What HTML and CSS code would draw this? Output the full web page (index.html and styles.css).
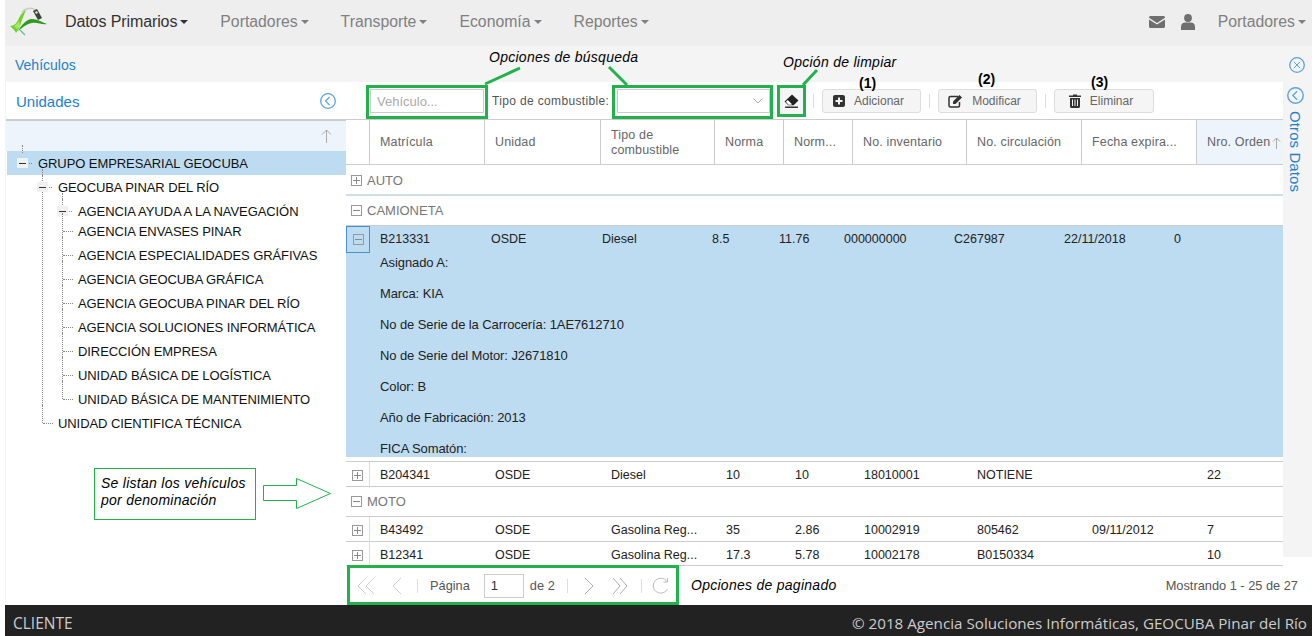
FILE: index.html
```html
<!DOCTYPE html>
<html lang="es">
<head>
    <meta charset="UTF-8">
    <title>Vehículos</title>
    <link rel="stylesheet" href="styles.css">
</head>
<body>
    <div class="page">
        <nav class="navbar">
            <svg class="logo" viewBox="0 0 42 32" width="42" height="32">
                <path d="M13 6C17 2 22 1 27 4" fill="none" stroke="#c8cec4" stroke-width="1.500"/>
                <path d="M1 20c4 0 7-3 9-8 2-4 4-6 7-8-2 5-4 9-5 13-1 4-3 7-5 10-1-3-4-5-6-7z" fill="#6fd22c"/>
                <path d="M9 25c3-5 8-12 14-12 5 0 10 3 15 5-5 1-10-2-15-1-6 1-10 5-14 8z" fill="#2f9a1e"/>
                <path d="M5 20c2-1 4-3 5-5l1 5-3 3z" fill="#a6ec5a"/>
                <path d="M11 24l5 5" stroke="#5cc0a0" stroke-width="1.200"/>
                <path d="M24 5l4-2 5 9-4 2z" fill="#3c423c"/>
                <path d="M26 6l2-1 1 2-2 1z" fill="#e4e8e2"/>
            </svg>
            <ul class="menu">
                <li class="menu-item active">Datos Primarios<i class="caret"></i></li>
                <li class="menu-item">Portadores<i class="caret"></i></li>
                <li class="menu-item">Transporte<i class="caret"></i></li>
                <li class="menu-item">Economía<i class="caret"></i></li>
                <li class="menu-item">Reportes<i class="caret"></i></li>
            </ul>
            <div class="nav-right">
                <svg class="nav-icon" viewBox="0 0 16 12" width="16" height="12"><path d="M0 1.500C0 .7.700 0 1.500 0h13c.8 0 1.500.7 1.500 1.500v.3L8 7 0 1.800zM0 3.400l8 5.200 8-5.200v7.100c0 .8-.7 1.500-1.500 1.500h-13C.7 12 0 11.300 0 10.500z" fill="#6f6f6f"/></svg>
                <svg class="nav-icon user" viewBox="0 0 14 16" width="14" height="16"><circle cx="7" cy="4" r="3.900" fill="#6f6f6f"/><path d="M0 16v-3.500C0 10 2 8.500 4 8.500h6c2 0 4 1.500 4 4V16z" fill="#6f6f6f"/></svg>
                <div class="menu-item">Portadores<i class="caret"></i></div>
            </div>
        </nav>

        <div class="content">
            <div class="title-bar">
                <span class="title">Vehículos</span>
                <svg class="round-icon" viewBox="0 0 16 16" width="16" height="16"><circle cx="8" cy="8" r="7.300" fill="none" stroke="#5aa5dc" stroke-width="1.300"/><path d="M4.800 4.800l6.400 6.400M11.200 4.800l-6.400 6.400" stroke="#5aa5dc" fill="none"/></svg>
            </div>

            <div class="panels">
                <aside class="tree-pane">
                    <div class="tree-head">
                        <span>Unidades</span>
                        <svg class="round-icon" viewBox="0 0 16 16" width="16" height="16"><circle cx="8" cy="8" r="7.300" fill="none" stroke="#5aa5dc" stroke-width="1.300"/><path d="M9.500 4L5.500 8l4 4" stroke="#5aa5dc" stroke-width="1.200" fill="none"/></svg>
                    </div>
                    <div class="tree-sort">
                        <svg viewBox="0 0 11 14" width="11" height="14"><path d="M5.500 14V1M1 5.500l4.500-4.500L10 5.500" stroke="#aaa" fill="none"/></svg>
                    </div>
                    <ul class="tree">
                        <li>
                            <div class="tree-row selected"><span class="tree-node open"></span>GRUPO EMPRESARIAL GEOCUBA</div>
                            <ul>
                                <li>
                                    <div class="tree-row"><span class="tree-node open"></span>GEOCUBA PINAR DEL RÍO</div>
                                    <ul>
                                        <li><div class="tree-row"><span class="tree-node open"></span>AGENCIA AYUDA A LA NAVEGACIÓN</div></li>
                                        <li><div class="tree-row short"><span class="tree-node"></span>AGENCIA ENVASES PINAR</div></li>
                                        <li><div class="tree-row"><span class="tree-node"></span>AGENCIA ESPECIALIDADES GRÁFIVAS</div></li>
                                        <li><div class="tree-row"><span class="tree-node"></span>AGENCIA GEOCUBA GRÁFICA</div></li>
                                        <li><div class="tree-row"><span class="tree-node"></span>AGENCIA GEOCUBA PINAR DEL RÍO</div></li>
                                        <li><div class="tree-row"><span class="tree-node"></span>AGENCIA SOLUCIONES INFORMÁTICA</div></li>
                                        <li><div class="tree-row"><span class="tree-node"></span>DIRECCIÓN EMPRESA</div></li>
                                        <li><div class="tree-row"><span class="tree-node"></span>UNIDAD BÁSICA DE LOGÍSTICA</div></li>
                                        <li><div class="tree-row"><span class="tree-node"></span>UNIDAD BÁSICA DE MANTENIMIENTO</div></li>
                                    </ul>
                                </li>
                                <li><div class="tree-row"><span class="tree-node"></span>UNIDAD CIENTIFICA TÉCNICA</div></li>
                            </ul>
                        </li>
                    </ul>
                </aside>

                <main class="main">
                    <div class="data-area">
                        <section class="grid">
                            <div class="toolbar">
                                <div class="field search">Vehículo...</div>
                                <label class="combo-label">Tipo de combustible:</label>
                                <div class="field combo">
                                    <svg viewBox="0 0 10 6" width="10" height="6"><path d="M.5.500L5 5 9.500.500" stroke="#aaa" fill="none"/></svg>
                                </div>
                                <button class="tool-btn clear">
                                    <svg viewBox="0 0 14 13" width="15" height="14"><path d="M7.500.500L13.500 6 9 10.500H4L.500 7z" fill="#222"/><path d="M3.500 5.500l4 4L6.500 10H4.200L1.800 7.300z" fill="#fff"/><path d="M1 12.300h12" stroke="#222" stroke-width="1.300"/></svg>
                                </button>
                                <span class="tool-sep"></span>
                                <button class="tool-btn">
                                    <svg viewBox="0 0 12 12" width="12" height="12"><path fill-rule="evenodd" d="M2 0h8c1.100 0 2 .9 2 2v8c0 1.100-.9 2-2 2H2c-1.100 0-2-.9-2-2V2C0 .9.900 0 2 0zm3 2.500V5H2.500v2H5v2.500h2V7h2.500V5H7V2.500z" fill="#333"/></svg>
                                    Adicionar
                                </button>
                                <span class="tool-sep"></span>
                                <button class="tool-btn">
                                    <svg viewBox="0 0 15 14" width="15" height="14"><path d="M10 2.500H2.500c-.8 0-1.500.7-1.500 1.500v7.500c0 .8.700 1.500 1.500 1.500H10c.8 0 1.500-.7 1.500-1.500V8" fill="none" stroke="#333" stroke-width="1.500"/><path d="M5 7.500L11.500 1 14 3.500 7.500 10H5z" fill="#333"/></svg>
                                    Modificar
                                </button>
                                <span class="tool-sep"></span>
                                <button class="tool-btn wide">
                                    <svg viewBox="0 0 12 14" width="12" height="14"><path d="M0 1.500h4V.500h4v1h4V3H0z" fill="#333"/><path fill-rule="evenodd" d="M1 4h10v8.500c0 .8-.7 1.500-1.500 1.500h-7C1.700 14 1 13.300 1 12.500zm2 1.500V12h1V5.500zm2.500 0V12h1V5.500zm2.500 0V12h1V5.500z" fill="#333"/></svg>
                                    Eliminar
                                </button>
                            </div>

                            <div class="grid-head">
                                <div class="head-cell blank"></div>
                                <div class="head-cell">Matrícula</div>
                                <div class="head-cell">Unidad</div>
                                <div class="head-cell">Tipo de combustible</div>
                                <div class="head-cell">Norma</div>
                                <div class="head-cell">Norm...</div>
                                <div class="head-cell">No. inventario</div>
                                <div class="head-cell">No. circulación</div>
                                <div class="head-cell">Fecha expira...</div>
                                <div class="head-cell sorted">Nro. Orden
                                    <svg viewBox="0 0 9 12" width="9" height="12"><path d="M4.500 12V1M1 4.500L4.500 1 8 4.500" stroke="#aaa" fill="none"/></svg>
                                </div>
                            </div>

                            <div class="group-row first"><i class="exp plus"></i>AUTO</div>
                            <div class="group-row"><i class="exp"></i>CAMIONETA</div>

                            <div class="detail-row">
                                <div class="detail-cells">
                                    <div class="exp-cell focused"><i class="exp"></i></div>
                                    <div>B213331</div>
                                    <div>OSDE</div>
                                    <div>Diesel</div>
                                    <div>8.5</div>
                                    <div>11.76</div>
                                    <div>000000000</div>
                                    <div>C267987</div>
                                    <div>22/11/2018</div>
                                    <div>0</div>
                                </div>
                                <div class="detail-info">
                                    <p>Asignado A:</p>
                                    <p>Marca: KIA</p>
                                    <p>No de Serie de la Carrocería: 1AE7612710</p>
                                    <p>No de Serie del Motor: J2671810</p>
                                    <p>Color: B</p>
                                    <p>Año de Fabricación: 2013</p>
                                    <p>FICA Somatón:</p>
                                </div>
                            </div>
                            <div class="detail-gap"></div>

                            <div class="data-row">
                                <div class="exp-cell"><i class="exp plus"></i></div>
                                <div>B204341</div><div>OSDE</div><div>Diesel</div><div>10</div><div>10</div><div>18010001</div><div>NOTIENE</div><div></div><div>22</div>
                            </div>
                            <div class="group-row"><i class="exp"></i>MOTO</div>
                            <div class="data-row">
                                <div class="exp-cell"><i class="exp plus"></i></div>
                                <div>B43492</div><div>OSDE</div><div>Gasolina Reg...</div><div>35</div><div>2.86</div><div>10002919</div><div>805462</div><div>09/11/2012</div><div>7</div>
                            </div>
                            <div class="data-row">
                                <div class="exp-cell"><i class="exp plus"></i></div>
                                <div>B12341</div><div>OSDE</div><div>Gasolina Reg...</div><div>17.3</div><div>5.78</div><div>10002178</div><div>B0150334</div><div></div><div>10</div>
                            </div>
                        </section>

                        <aside class="side-strip">
                            <svg class="round-icon" viewBox="0 0 16 16" width="17" height="17"><circle cx="8" cy="8" r="7.300" fill="none" stroke="#5aa5dc" stroke-width="1.300"/><path d="M9.500 4L5.500 8l4 4" stroke="#5aa5dc" stroke-width="1.200" fill="none"/></svg>
                            <span class="side-label">Otros Datos</span>
                        </aside>
                    </div>

                    <div class="pager">
                        <svg class="pg-icon" viewBox="0 0 18 18" width="18" height="18"><path d="M9 1L1 9l8 8M17 1L9 9l8 8" stroke="#ccc" fill="none"/></svg>
                        <svg class="pg-icon prev" viewBox="0 0 12 18" width="12" height="18"><path d="M10 1L2 9l8 8" stroke="#ccc" fill="none"/></svg>
                        <span class="pg-sep"></span>
                        <span class="pg-text">Página</span>
                        <div class="pg-input">1</div>
                        <span class="pg-text of">de 2</span>
                        <span class="pg-sep"></span>
                        <svg class="pg-icon next" viewBox="0 0 12 18" width="12" height="18"><path d="M2 1l8 8-8 8" stroke="#aaa" fill="none"/></svg>
                        <svg class="pg-icon last" viewBox="0 0 16 18" width="16" height="18"><path d="M1 1l7 8-7 8M8 1l7 8-7 8" stroke="#aaa" fill="none"/></svg>
                        <span class="pg-sep"></span>
                        <svg class="pg-icon reload" viewBox="0 0 18 18" width="18" height="18"><path d="M15.500 12a7.500 7.500 0 1 1-.5-7.500M15.500 1v4h-4" stroke="#bbb" fill="none"/></svg>
                        <span class="pg-status">Mostrando 1 - 25 de 27</span>
                    </div>
                </main>
            </div>
        </div>

        <footer class="footer">
            <span class="role">CLIENTE</span>
            <span>© 2018 Agencia Soluciones Informáticas, GEOCUBA Pinar del Río</span>
        </footer>
    </div>

    <!-- notes drawn on top of the screenshot -->
    <div class="notes">
        <svg class="notes-lines" viewBox="0 0 1312 636" width="1312" height="636">
            <g fill="none" stroke="#22b14c" stroke-width="3">
                <rect x="367.500" y="86.500" width="119" height="31"/>
                <rect x="613.500" y="86.500" width="158" height="31"/>
                <rect x="778.500" y="86.500" width="26" height="29"/>
                <rect x="348.500" y="566.500" width="329" height="37"/>
                <path d="M485 84l35-16M627 85l-18-18M803 85l14-15"/>
            </g>
            <rect x="94.500" y="468.500" width="161" height="51" fill="#fff" stroke="#22b14c"/>
            <path d="M263.500 485.500h33v-7l34 15-34 15v-8h-33z" fill="#fff" stroke="#22b14c"/>
        </svg>
        <span class="note n-search">Opciones de búsqueda</span>
        <span class="note n-clear">Opción de limpiar</span>
        <span class="note n-list">Se listan los vehículos<br>por denominación</span>
        <span class="note n-pager">Opciones de paginado</span>
        <span class="num n1">(1)</span>
        <span class="num n2">(2)</span>
        <span class="num n3">(3)</span>
    </div>
</body>
</html>
```

FILE: styles.css
```css
* {
    box-sizing: border-box;
}

html, body {
    margin: 0;
    height: 100%;
    overflow: hidden;
}

body {
    font-family: "Liberation Sans", Arial, sans-serif;
    font-size: 12px;
    color: #222;
    background-color: #fff;
}

ul {
    list-style: none;
    margin: 0;
    padding: 0;
}

.page {
    display: flex;
    flex-direction: column;
    height: 636px;
    padding-left: 5px;
}

/* navbar */
.navbar {
    display: flex;
    align-items: center;
    height: 46px;
    flex: none;
    padding-bottom: 2px;
    background-color: #eee;
}

.logo {
    margin-left: 4px;
    flex: none;
}

.menu {
    display: flex;
    margin-left: -2px;
}

.menu-item {
    padding: 0 16px;
    font-size: 15.8px;
    color: #808080;
    white-space: nowrap;
}

.menu-item.active {
    font-size: 16px;
    color: #333;
    letter-spacing: -.1px;
}

.caret {
    display: inline-block;
    margin-left: 3px;
    vertical-align: 3px;
    border-top: 4px solid currentColor;
    border-left: 4px solid transparent;
    border-right: 4px solid transparent;
}

.nav-right {
    display: flex;
    align-items: center;
    margin-left: auto;
}

.nav-icon {
    margin-right: 16px;
}

.nav-icon.user {
    margin-right: 7px;
}

.nav-right .menu-item {
    padding: 0 6px 0 16px;
}

/* page frame */
.content {
    flex: 1;
    display: flex;
    flex-direction: column;
    min-height: 0;
    background-color: #f4f4f4;
}

.title-bar {
    display: flex;
    align-items: center;
    justify-content: space-between;
    height: 36px;
    flex: none;
    padding: 1px 7px 0 10px;
}

.title {
    font-size: 14px;
    color: #1b81cd;
}

.round-icon {
    flex: none;
}

.panels {
    flex: 1;
    display: flex;
    min-height: 0;
}

/* left tree */
.tree-pane {
    width: 340px;
    flex: none;
    margin-left: 1px;
    background-color: #fff;
}

.tree-head {
    display: flex;
    align-items: center;
    justify-content: space-between;
    height: 39px;
    padding: 1px 10px 0 10px;
    font-size: 15px;
    color: #1b81cd;
    border-bottom: 2px solid #ccc;
}

.tree-sort {
    display: flex;
    align-items: center;
    justify-content: flex-end;
    height: 30px;
    padding-right: 14px;
    background-color: #edf4fb;
}

.tree {
    font-size: 13px;
    letter-spacing: -.08px;
    color: #111;
}

.tree-row {
    display: flex;
    align-items: center;
    height: 24px;
    margin-left: 1px;
    white-space: nowrap;
}

.tree-row.short {
    margin-top: -4px;
}

.tree-row.selected {
    background-color: #bedcf1;
}

.tree ul {
    position: relative;
    padding-left: 20px;
}

.tree ul::before {
    content: "";
    position: absolute;
    left: 36px;
    top: 0;
    bottom: 12px;
    border-left: 1px dotted #888;
}

.tree-node {
    position: relative;
    align-self: stretch;
    width: 31px;
    flex: none;
}

.tree-node::before {
    content: "";
    position: absolute;
    left: 15px;
    top: -6px;
    height: 18px;
    border-left: 1px dotted #888;
}

.tree-node::after {
    content: "";
    position: absolute;
    left: 16px;
    top: 50%;
    width: 10px;
    border-top: 1px dotted #888;
}

.tree-node.open {
    background:
        linear-gradient(#333, #333) 12px 50% / 7px 1px no-repeat,
        linear-gradient(#f1f1f1, #f1f1f1) 10px 50% / 11px 10px no-repeat;
}

.tree-node.open::before {
    height: 8px;
}

.tree-node.open::after {
    left: 22px;
    width: 3px;
}

/* grid */
.main {
    flex: 1;
    display: flex;
    flex-direction: column;
    min-width: 0;
    background-color: #fff;
}

.data-area {
    flex: 1;
    display: flex;
    min-height: 0;
}

.grid {
    width: 937px;
    flex: none;
    overflow: hidden;
}

.toolbar {
    display: flex;
    align-items: center;
    gap: 8px;
    height: 38px;
    padding: 1px 0 0 24px;
    border-bottom: 1px solid #ccc;
}

.field {
    display: flex;
    align-items: center;
    height: 24px;
    border: 1px solid #ccc;
    background-color: #fff;
}

.search {
    width: 114px;
    padding-left: 6px;
    font-size: 13px;
    color: #aaa;
}

.combo-label {
    width: 117px;
    color: #555;
    white-space: nowrap;
    letter-spacing: .35px;
}

.combo {
    width: 153px;
    justify-content: flex-end;
    padding-right: 6px;
}

.tool-btn {
    display: flex;
    align-items: center;
    justify-content: center;
    gap: 9px;
    width: 99px;
    height: 24px;
    padding: 0 6px 0 0;
    font: inherit;
    color: #666;
    background-color: #f5f5f5;
    border: 1px solid #ddd;
    border-radius: 3px;
}

.tool-btn.wide {
    width: 100px;
}

.tool-btn.clear {
    width: 27px;
    height: 28px;
    padding: 0;
    border: none;
}

.tool-sep {
    width: 1px;
    height: 14px;
    background-color: #ddd;
}

.grid-head {
    display: grid;
    grid-template-columns: 23px 115px 116px 114px 69px 69px 114px 115px 115px 87px;
    height: 45px;
    border-bottom: 1px solid #ccc;
}

.head-cell {
    display: flex;
    align-items: center;
    padding: 1px 0 0 10px;
    font-size: 12.5px;
    line-height: 15px;
    letter-spacing: .15px;
    color: #666;
    border-left: 1px solid #ccc;
}

.head-cell.blank {
    border-left: none;
}

.head-cell.sorted {
    justify-content: space-between;
    padding-right: 2px;
    white-space: nowrap;
    background-color: #edf4fb;
}

.group-row {
    display: flex;
    align-items: center;
    height: 30px;
    padding-left: 5px;
    font-size: 13px;
    color: #777;
    border-bottom: 1px solid #ccc;
}

.group-row.first {
    height: 31px;
    padding-top: 1px;
    border-bottom: 2px solid #cfdde8;
}

.group-row .exp {
    margin-right: 5px;
}

.exp {
    position: relative;
    display: block;
    width: 11px;
    height: 11px;
    flex: none;
    border: 1px solid #999;
    background: linear-gradient(#888, #888) center / 7px 1px no-repeat;
}

.exp.plus::after {
    content: "";
    position: absolute;
    left: 4px;
    top: 1px;
    width: 1px;
    height: 7px;
    background-color: #888;
}

.exp-cell {
    display: flex;
    align-items: center;
    justify-content: center;
    border-right: 1px solid #ddd;
    margin-right: 10px;
}

.data-row {
    display: grid;
    grid-template-columns: 34px 115px 116px 115px 69px 69px 113px 115px 115px 76px;
    height: 25px;
    font-size: 12.5px;
    line-height: 26px;
    color: #222;
    border-bottom: 1px solid #ccc;
}

.data-row .exp-cell {
    width: 24px;
}

.data-row:last-child {
    height: 24px;
}

.detail-row {
    height: 231px;
    background-color: #bedcf1;
}

.detail-cells {
    display: grid;
    grid-template-columns: 34px 111px 111px 110px 67px 65px 110px 110px 110px 60px;
    height: 24px;
    font-size: 12.5px;
    line-height: 27px;
}

.detail-cells .exp-cell {
    width: 24px;
    border: 1px solid #4a90c8;
}

.detail-info {
    padding-left: 34px;
    font-size: 13px;
}

.detail-info p {
    margin: 5px 0 16px;
    line-height: 15px;
    letter-spacing: -.1px;
}

.detail-gap {
    height: 5px;
    border-bottom: 1px solid #ccc;
}

/* right strip */
.side-strip {
    display: flex;
    flex-direction: column;
    align-items: center;
    flex: 1;
    align-self: flex-start;
    height: 475px;
    padding: 5px 4px 0 0;
    background-color: #f4f4f4;
}

.side-label {
    margin-top: 7px;
    writing-mode: vertical-rl;
    font-size: 15px;
    letter-spacing: .1px;
    color: #1b81cd;
}

/* pager */
.pager {
    display: flex;
    align-items: center;
    height: 39px;
    flex: none;
    padding: 0 14px 0 11px;
    color: #555;
}

.pg-icon {
    flex: none;
}

.pg-icon.prev {
    margin: 0 2px 0 16px;
}

.pg-icon.next {
    margin-left: 3px;
}

.pg-icon.last {
    margin: 0 1px 0 17px;
}

.pg-icon.reload {
    margin-left: -2px;
}

.pg-sep {
    width: 1px;
    height: 14px;
    margin: 0 12px;
    background-color: #ddd;
}

.pg-text {
    white-space: nowrap;
    font-size: 12.8px;
}

.pg-input {
    display: flex;
    align-items: center;
    width: 40px;
    height: 24px;
    margin: 0 6px 0 14px;
    padding-left: 6px;
    font-size: 13px;
    border: 1px solid #ccc;
    color: #333;
}

.pg-status {
    margin-left: auto;
    font-size: 12.8px;
}

/* footer */
.footer {
    display: flex;
    align-items: center;
    justify-content: space-between;
    height: 31px;
    flex: none;
    padding: 5px 5px 0 8px;
    font-family: "Open Sans", sans-serif;
    font-size: 15.200px;
    color: #ccc;
    background-color: #222;
}

.role {
    font-size: 15.500px;
}

/* annotations over the page */
.notes {
    position: absolute;
    inset: 0;
    pointer-events: none;
}

.notes-lines {
    position: absolute;
    left: 0;
    top: 0;
}

.note {
    position: absolute;
    font-size: 14px;
    font-style: italic;
    line-height: 17px;
    letter-spacing: .27px;
    color: #000;
    white-space: nowrap;
}

.n-search { left: 489px; top: 49px; }
.n-clear { left: 783px; top: 54px; }
.n-list { left: 101px; top: 475px; }
.n-pager { left: 691px; top: 577px; }

.num {
    position: absolute;
    font-size: 14px;
    font-weight: bold;
    color: #000;
}

.n1 { left: 859px; top: 75px; }
.n2 { left: 978px; top: 71px; }
.n3 { left: 1091px; top: 74px; }
```
